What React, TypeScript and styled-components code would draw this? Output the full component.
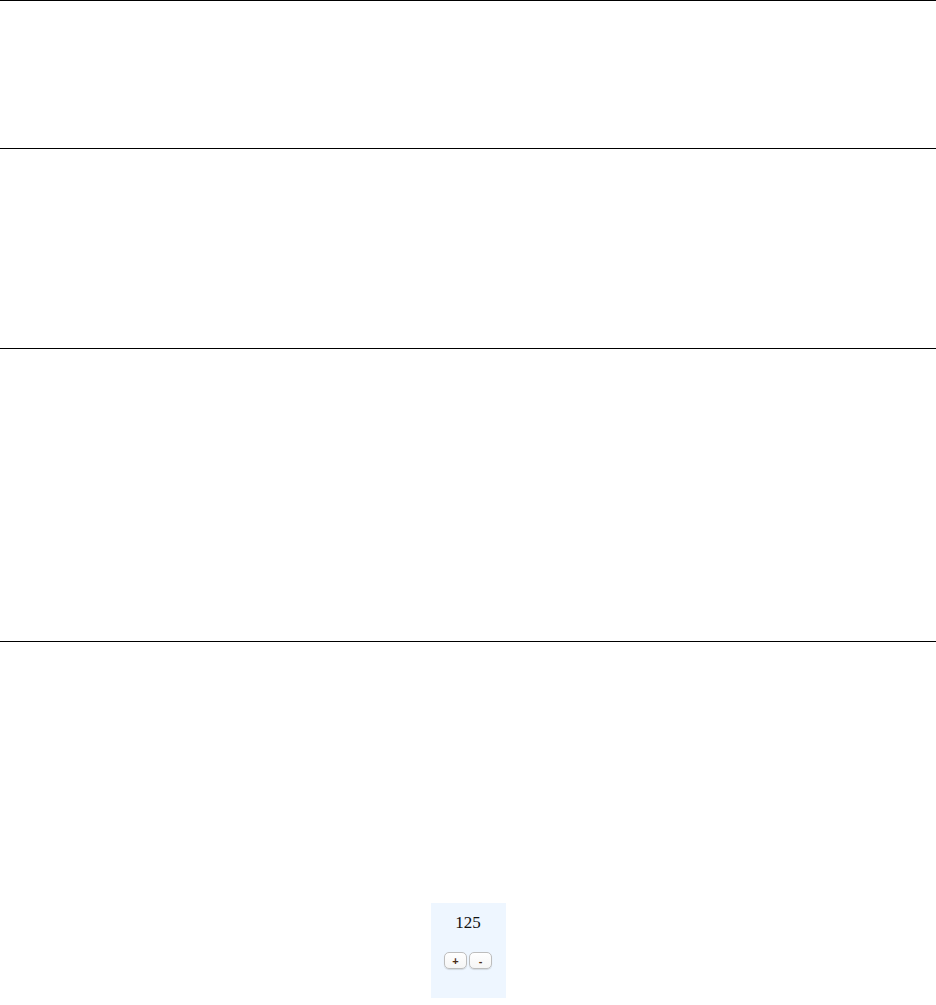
import React, { useState } from "react";
import styled, { createGlobalStyle } from "styled-components";

const Global = createGlobalStyle`
  html, body { margin: 0; padding: 0; background: #fff; }
  body { font-family: "Liberation Serif", "Times New Roman", serif; }
`;

const Page = styled.div`
  display: flex;
  flex-direction: column;
  width: 936px;
`;

const Band = styled.section<{ $h: number }>`
  height: ${(p) => p.$h}px;
  border-top: 1px solid #000;
  box-sizing: border-box;
`;

const LastBand = styled.section`
  border-top: 1px solid #000;
  height: 364px;
  box-sizing: border-box;
  display: flex;
  justify-content: center;
  align-items: flex-start;
  padding-top: 261px;
`;

const Counter = styled.div`
  width: 75px;
  height: 95px;
  background: #eef6ff;
  display: flex;
  flex-direction: column;
  align-items: center;
  box-sizing: border-box;
  padding-top: 10px;
`;

const Value = styled.div`
  font-family: "Liberation Serif", "Times New Roman", serif;
  font-size: 17px;
  line-height: 20px;
  color: #111;
`;

const Buttons = styled.div`
  display: flex;
  gap: 2px;
  margin-top: 19px;
`;

const Btn = styled.button`
  width: 23px;
  height: 17px;
  padding: 0;
  border: 1px solid #bdbdbd;
  border-radius: 5px;
  background: linear-gradient(#ffffff, #f5f5f5);
  box-shadow: 0 1px 1px rgba(0, 0, 0, 0.12);
  font-family: "Liberation Sans", Arial, sans-serif;
  font-size: 11px;
  font-weight: bold;
  line-height: 14px;
  color: #4a2c14;
  display: flex;
  align-items: center;
  justify-content: center;
`;

export default function App() {
  const [n, setN] = useState(125);
  return (
    <Page>
      <Global />
      <Band $h={148} />
      <Band $h={200} />
      <Band $h={293} />
      <LastBand>
        <Counter>
          <Value>{n}</Value>
          <Buttons>
            <Btn onClick={() => setN(n + 1)}>+</Btn>
            <Btn onClick={() => setN(n - 1)}>-</Btn>
          </Buttons>
        </Counter>
      </LastBand>
    </Page>
  );
}
